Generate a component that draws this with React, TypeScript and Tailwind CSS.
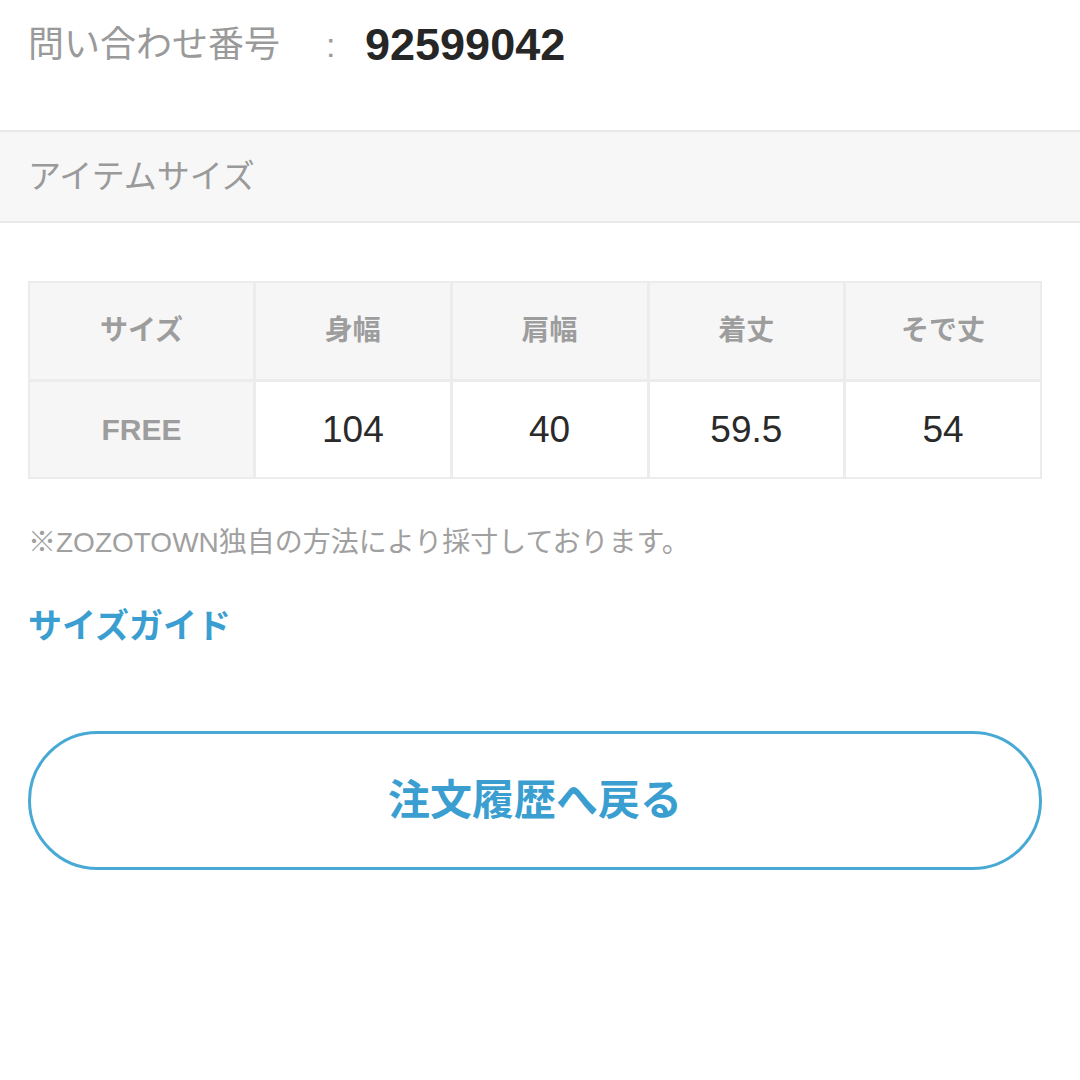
const font = "font-['Liberation_Sans','Noto_Sans_CJK_JP',sans-serif]";

const headers = ["サイズ", "身幅", "肩幅", "着丈", "そで丈"];
const values = ["104", "40", "59.5", "54"];

export default function App() {
  return (
    <div className={`w-[1080px] h-[1080px] bg-white ${font}`}>
      {/* INQUIRY NUMBER */}
      <div className="flex items-center h-[90px] pl-[28px]">
        <span className="text-[#9a9a9a] text-[36px] w-[298px]">問い合わせ番号</span>
        <span className="text-[#9a9a9a] text-[34px] w-[39px]">:</span>
        <span className="text-[#262626] font-bold text-[45px]">92599042</span>
      </div>

      {/* SECTION HEADER */}
      <div className="mt-[40px] h-[93px] flex items-center px-[28px] bg-[#f7f7f7] border-y-2 border-[#e9e9e9]">
        <span className="text-[33px] text-[#9a9a9a]">アイテムサイズ</span>
      </div>

      {/* SIZE TABLE */}
      <div className="ml-[28px] mr-[38px] mt-[58px] grid grid-cols-[223px_1fr_1fr_1fr_1fr] gap-[3px] p-[2px] bg-[#ececec]">
        {headers.map((h) => (
          <div key={h} className="h-[96px] flex items-center justify-center bg-[#f6f6f6] text-[28px] font-bold text-[#9d9d9d]">
            {h}
          </div>
        ))}
        <div className="h-[95px] flex items-center justify-center bg-[#f6f6f6] text-[30px] font-bold text-[#9d9d9d]">
          FREE
        </div>
        {values.map((v) => (
          <div key={v} className="h-[95px] flex items-center justify-center bg-white text-[37px] text-[#2a2a2a]">
            {v}
          </div>
        ))}
      </div>

      {/* NOTE */}
      <p className="mt-[44px] px-[28px] text-[28px] text-[#a0a0a0] leading-[40px]">
        ※ZOZOTOWN独自の方法により採寸しております。
      </p>

      <p className="mt-[43px] px-[28px] text-[34px] font-bold text-[#3a9fd0] leading-[40px]">サイズガイド</p>

      {/* BACK BUTTON */}
      <div className="mt-[85px] ml-[28px] mr-[38px] h-[139px] rounded-full border-[3px] border-[#48aad4] flex items-center justify-center">
        <span className="text-[42px] font-bold text-[#3a9fd0]">注文履歴へ戻る</span>
      </div>
    </div>
  );
}
